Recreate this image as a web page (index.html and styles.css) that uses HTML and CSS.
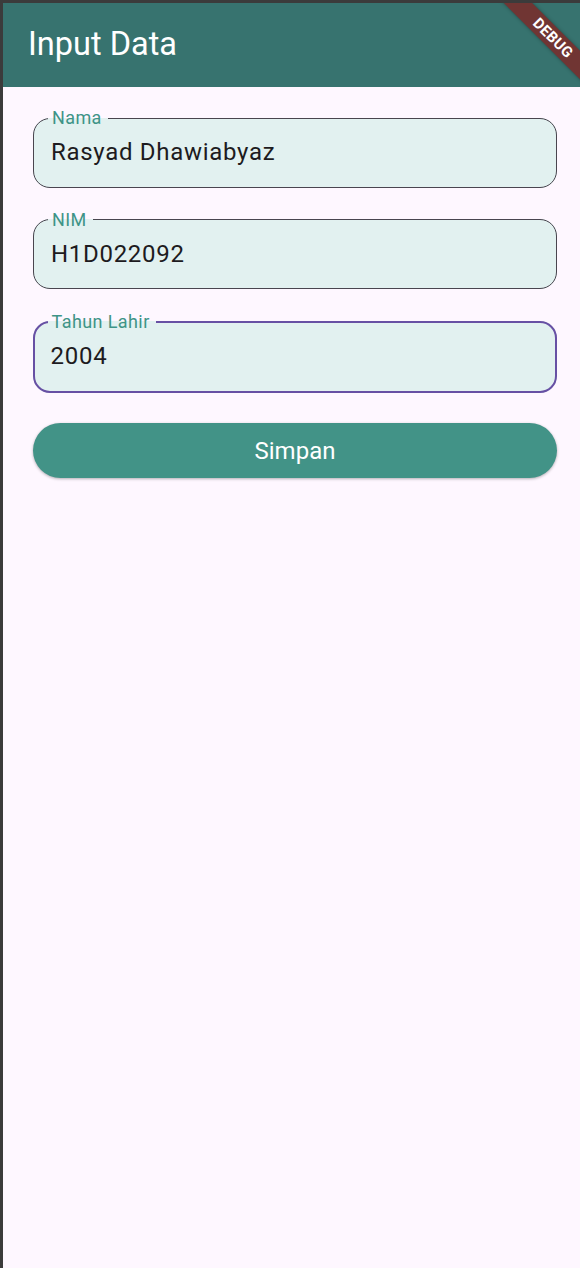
FILE: index.html
```html
<!DOCTYPE html>
<html lang="id">
<head>
<meta charset="utf-8">
<title>Input Data</title>
<link rel="stylesheet" href="styles.css">
</head>
<body>
<div class="screen">
  <header class="appbar">
    <h1 class="title">Input Data</h1>
    <div class="debug">DEBUG</div>
  </header>
  <main class="form">
    <fieldset class="field">
      <legend class="label">Nama</legend>
      <div class="value">Rasyad Dhawiabyaz</div>
    </fieldset>
    <fieldset class="field">
      <legend class="label">NIM</legend>
      <div class="value">H1D022092</div>
    </fieldset>
    <fieldset class="field focused">
      <legend class="label">Tahun Lahir</legend>
      <div class="value">2004</div>
    </fieldset>
    <button class="btn" type="button">Simpan</button>
  </main>
</div>
</body>
</html>
```
FILE: styles.css
```css
* { box-sizing: border-box; }
html, body { margin: 0; padding: 0; }
body {
  background: #3b3b3b;
  font-family: Roboto, "Liberation Sans", sans-serif;
  width: 580px;
  height: 1268px;
  overflow: hidden;
}
.screen {
  margin: 3px 0 0 3px;
  height: 1265px;
  background: #fef7ff;
  position: relative;
  overflow: hidden;
}
.appbar {
  height: 84px;
  background: #37736f;
  display: flex;
  align-items: center;
  padding-left: 25px;
  position: relative;
  overflow: hidden;
}
.title {
  margin: 0;
  font-size: 32.5px;
  font-weight: 400;
  color: #ffffff;
  line-height: 1;
  margin-top: -2px;
}
.debug {
  position: absolute;
  width: 130px;
  height: 20px;
  left: 485px;
  top: 25px;
  transform: rotate(45deg);
  background: #703533;
  color: #fff;
  font-size: 15px;
  font-weight: 700;
  line-height: 20px;
  text-align: center;
  letter-spacing: 0.3px;
  box-shadow: 0 0 4px rgba(0,0,0,0.35);
}
.form {
  padding: 21px 23px 0 30px;
  display: flex;
  flex-direction: column;
}
.field {
  margin: 0 0 22px 0;
  padding: 0 17px;
  border: 1.5px solid #49454f;
  border-radius: 17px;
  background: #e2f1f0;
  min-width: 0;
}
.label {
  padding: 0 6px 0 4px;
  margin-left: -3px;
  font-size: 18px;
  line-height: 20px;
  color: #3e9487;
  letter-spacing: 0.4px;
}
.value {
  font-size: 24px;
  line-height: 30px;
  color: #1d1b20;
  letter-spacing: 0.7px;
  padding-top: 9px;
  padding-bottom: 19.5px;
}
.field.focused {
  margin-top: 1px;
  border: 2.9px solid #6750a4;
  padding: 0 15.6px;
}
.field.focused .value {
  padding-top: 8.5px;
  padding-bottom: 20.6px;
}
.btn {
  margin-top: 8px;
  height: 55px;
  border: none;
  border-radius: 28px;
  background: #429387;
  color: #ffffff;
  font-family: Roboto, "Liberation Sans", sans-serif;
  font-size: 24px;
  font-weight: 400;
  box-shadow: 0 1px 3px rgba(0,0,0,0.3);
  padding: 0;
}
```
